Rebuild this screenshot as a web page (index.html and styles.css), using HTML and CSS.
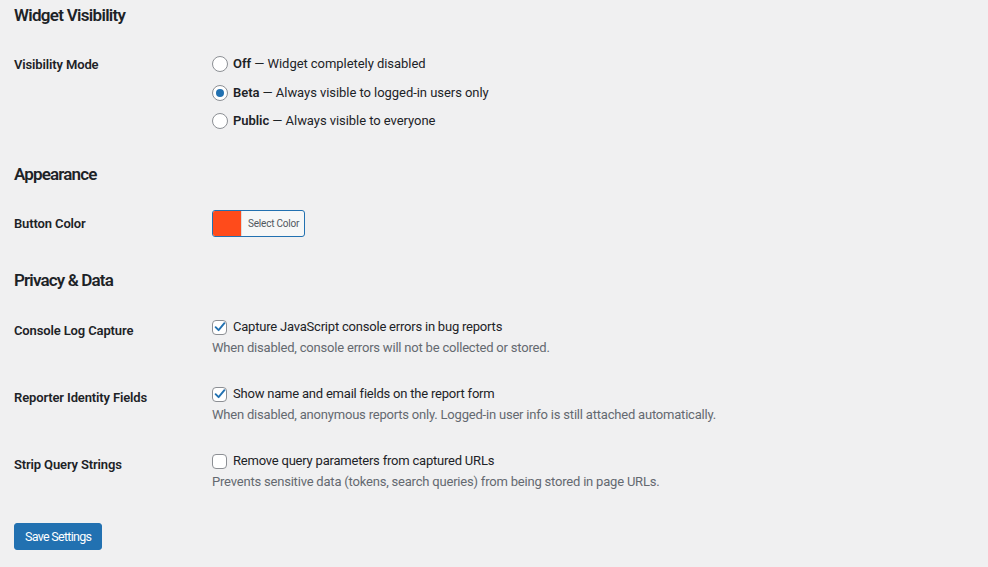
FILE: index.html
```html
<!DOCTYPE html>
<html lang="en">
<head>
<meta charset="utf-8">
<title>Widget Settings</title>
<link rel="stylesheet" href="styles.css">
</head>
<body>
<form class="settings">
  <h2 class="section-title first">Widget Visibility</h2>
  <div class="row row-mode">
    <div class="th th-top">Visibility Mode</div>
    <div class="td">
      <label class="option radio-option"><span class="radio"></span><span><b>Off</b> — Widget completely disabled</span></label>
      <label class="option radio-option"><span class="radio checked"></span><span><b>Beta</b> — Always visible to logged-in users only</span></label>
      <label class="option radio-option"><span class="radio"></span><span><b>Public</b> — Always visible to everyone</span></label>
    </div>
  </div>

  <h2 class="section-title sec2">Appearance</h2>
  <div class="row row-color">
    <div class="th">Button Color</div>
    <div class="td">
      <button type="button" class="color-result"><span class="swatch"></span><span class="color-text">Select Color</span></button>
    </div>
  </div>

  <h2 class="section-title sec3">Privacy &amp; Data</h2>
  <div class="row row-check first-check">
    <div class="th th-check">Console Log Capture</div>
    <div class="td">
      <label class="option"><span class="checkbox checked"><svg viewBox="0 0 16 16" width="16" height="16"><path d="M3.6 8.2 L6.6 11.2 L12.4 4.2" fill="none" stroke="#2271b1" stroke-width="1.9" stroke-linecap="round" stroke-linejoin="round"/></svg></span><span>Capture JavaScript console errors in bug reports</span></label>
      <p class="description">When disabled, console errors will not be collected or stored.</p>
    </div>
  </div>
  <div class="row row-check">
    <div class="th th-check">Reporter Identity Fields</div>
    <div class="td">
      <label class="option"><span class="checkbox checked"><svg viewBox="0 0 16 16" width="16" height="16"><path d="M3.6 8.2 L6.6 11.2 L12.4 4.2" fill="none" stroke="#2271b1" stroke-width="1.9" stroke-linecap="round" stroke-linejoin="round"/></svg></span><span>Show name and email fields on the report form</span></label>
      <p class="description">When disabled, anonymous reports only. Logged-in user info is still attached automatically.</p>
    </div>
  </div>
  <div class="row row-check">
    <div class="th th-check">Strip Query Strings</div>
    <div class="td">
      <label class="option"><span class="checkbox"></span><span>Remove query parameters from captured URLs</span></label>
      <p class="description">Prevents sensitive data (tokens, search queries) from being stored in page URLs.</p>
    </div>
  </div>

  <div class="submit">
    <button type="button" class="button-primary">Save Settings</button>
  </div>
</form>
</body>
</html>
```

FILE: styles.css
```css
html, body {
  margin: 0;
  padding: 0;
  background: #f0f0f1;
}
body {
  font-family: Roboto, "Liberation Sans", sans-serif;
  font-size: 13px;
  color: #1d2327;
}
.settings {
  padding: 0 14px;
}
.section-title {
  margin: 0;
  font-size: 17px;
  font-weight: 600;
  line-height: 22px;
  letter-spacing: -0.7px;
  color: #1d2327;
}
.section-title.first { padding-top: 4px; }
.section-title.sec2 { margin-top: 33px; letter-spacing: -0.85px; }
.section-title.sec3 { margin-top: 32px; letter-spacing: -0.85px; }

.row {
  display: grid;
  grid-template-columns: 198px 1fr;
}
.th {
  font-weight: 600;
  line-height: 17px;
  letter-spacing: -0.13px;
}
.td b { font-weight: 600; }

.row-mode { margin-top: 29px; }
.row-mode .th { padding-top: 0.5px; }
.row-mode .option + .option { margin-top: 10.5px; }

.option {
  display: flex;
  align-items: center;
  height: 18px;
  line-height: 18px;
  white-space: nowrap;
  letter-spacing: -0.21px;
}
.option.radio-option {
  letter-spacing: -0.05px;
}
.radio {
  box-sizing: border-box;
  width: 16px;
  height: 16px;
  border: 1px solid #8c8f94;
  border-radius: 50%;
  background: #fff;
  margin-right: 5px;
  display: flex;
  align-items: center;
  justify-content: center;
  flex: none;
}
.radio.checked::before {
  content: "";
  width: 8px;
  height: 8px;
  border-radius: 50%;
  background: #2271b1;
}
.checkbox {
  box-sizing: border-box;
  width: 15px;
  height: 15px;
  border: 1px solid #8c8f94;
  border-radius: 4px;
  background: #fff;
  margin-right: 6px;
  display: flex;
  align-items: center;
  justify-content: center;
  flex: none;
}
.checkbox svg { display: block; flex: none; }

.row-color {
  margin-top: 25px;
  align-items: center;
}
.color-result {
  display: flex;
  align-items: stretch;
  height: 27px;
  padding: 0;
  margin: 0;
  border: 1px solid #2271b1;
  border-radius: 3px;
  background: #f6f7f7;
  overflow: hidden;
  cursor: pointer;
  font: inherit;
}
.swatch {
  width: 28px;
  background: #ff4b1b;
  border-right: 1px solid #dcdcde;
}
.color-text {
  padding: 0 5px 0 6px;
  font-size: 10px;
  letter-spacing: -0.2px;
  line-height: 25px;
  color: #50575e;
}

.row-check { margin-top: 28.5px; }
.row-check.first-check { margin-top: 27px; }
.th-check { padding-top: 3.5px; }
.description {
  margin: 2.5px 0 0;
  line-height: 18px;
  color: #646970;
  white-space: nowrap;
  letter-spacing: -0.2px;
}

.submit { margin-top: 32.5px; }
.button-primary {
  height: 27px;
  padding: 0 10px;
  margin: 0;
  border: 1px solid #2271b1;
  border-radius: 3px;
  background: #2271b1;
  color: #fff;
  font: inherit;
  font-size: 12.5px;
  letter-spacing: -0.7px;
  line-height: 25px;
  cursor: pointer;
}
```
